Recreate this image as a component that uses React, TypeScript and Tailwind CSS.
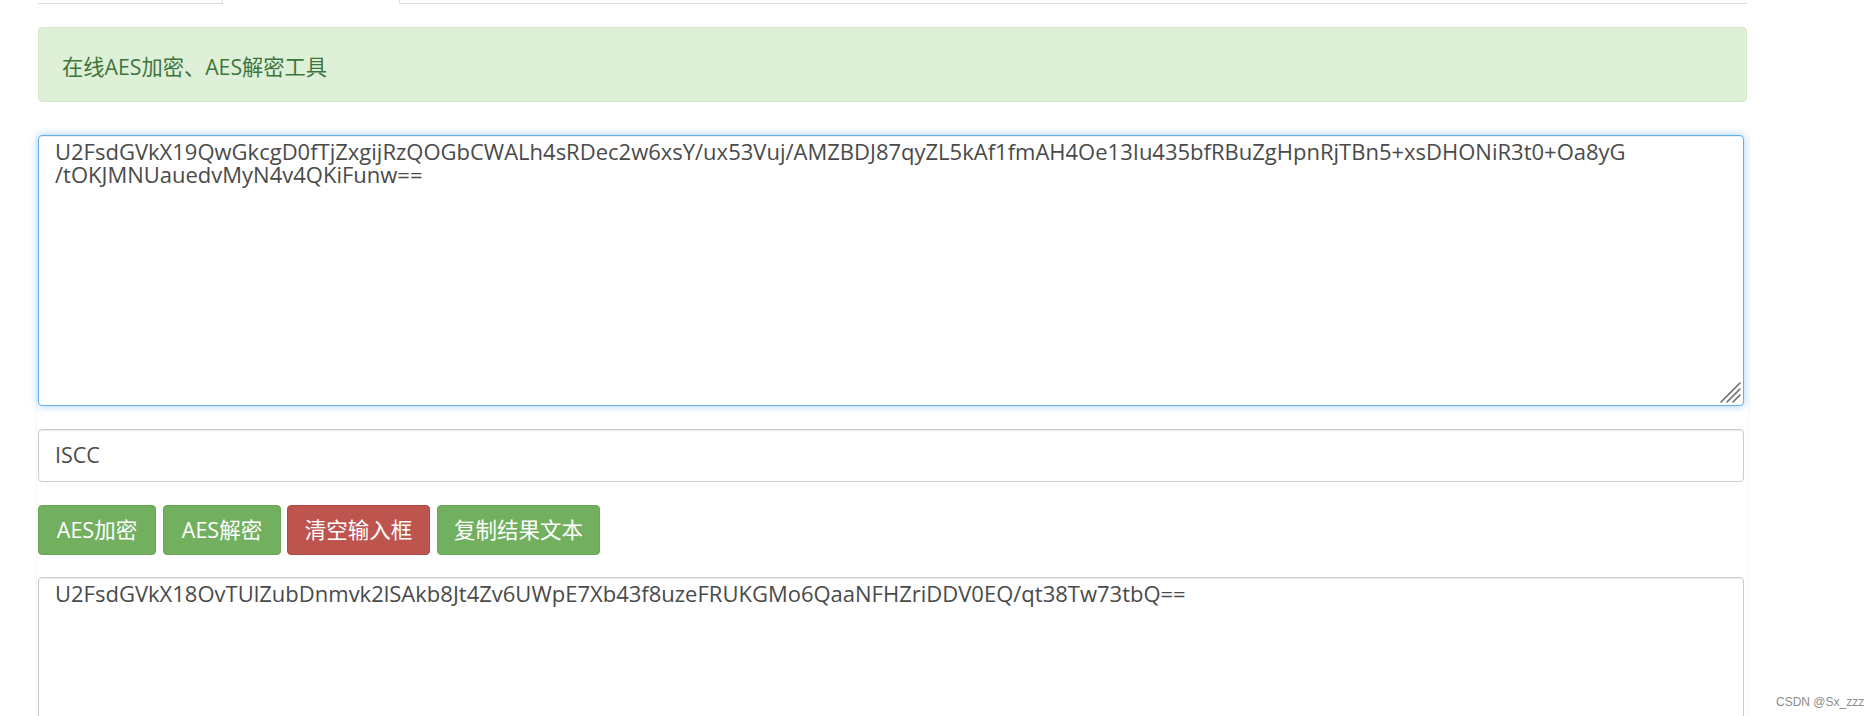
import React from 'react';

const cipherLines = [
  'U2FsdGVkX19QwGkcgD0fTjZxgijRzQOGbCWALh4sRDec2w6xsY/ux53Vuj/AMZBDJ87qyZL5kAf1fmAH4Oe13Iu435bfRBuZgHpnRjTBn5+xsDHONiR3t0+Oa8yG',
  '/tOKJMNUauedvMyN4v4QKiFunw==',
];

const resultText = 'U2FsdGVkX18OvTUlZubDnmvk2lSAkb8Jt4Zv6UWpE7Xb43f8uzeFRUKGMo6QaaNFHZriDDV0EQ/qt38Tw73tbQ==';

// Bootstrap-ish buttons, widths taken from the screenshot
const buttons = [
  { label: 'AES加密', cls: 'w-[118px] bg-[#72b060] border-[#68a656]' },
  { label: 'AES解密', cls: 'w-[118px] ml-[7px] bg-[#72b060] border-[#68a656]' },
  { label: '清空输入框', cls: 'w-[143px] ml-[6px] bg-[#bd544e] border-[#b04a45]' },
  { label: '复制结果文本', cls: 'w-[163px] ml-[7px] bg-[#72b060] border-[#68a656]' },
];

const ResizeGrip = () => (
  <svg width="22" height="22" viewBox="0 0 22 22" className="absolute right-[2px] bottom-[2px]">
    <path d="M2 21 L21 2 M8 21 L21 8 M14 21 L21 14" stroke="#6b6b6b" strokeWidth="1.6" strokeLinecap="round" />
  </svg>
);

const App: React.FC = () => {
  return (
    <div className="relative w-[1868px] h-[716px] overflow-hidden bg-white font-['Open_Sans','Noto_Sans_CJK_SC',sans-serif] text-[21.5px]">
      <div className="ml-[38px] w-[1709px]">
        {/* Tabs (scrolled mostly out of view) */}
        <div className="flex h-[4px]">
          <div className="w-[184px] border-b border-[#ddd]" />
          <div className="w-[178px] border-x border-[#ddd]" />
          <div className="flex-1 border-b border-[#ddd]" />
        </div>

        {/* Alert */}
        <div className="mt-[23px] h-[75px] flex items-center pt-[4px] pl-[23px] bg-[#dff0d8] border border-[#d6e9c6] rounded-[4px] text-[#3c763d] text-[21.25px]">
          在线AES加密、AES解密工具
        </div>
      </div>

      <div className="ml-[36px] w-[1713px] border-x border-[#f6f6f6] pl-[1px] pr-[4px]">
        {/* Input textarea (focused) */}
        <div className="relative mt-[33px] h-[271px] border border-[#66afe9] rounded-[4px] bg-white shadow-[inset_0_1px_1px_rgba(0,0,0,0.075),0_0_8px_rgba(102,175,233,0.6)] px-[16px] pt-[4px] text-[22px] leading-[23px] text-[#4a4a4a]">
          {cipherLines.map((line, i) => (
            <div key={i} className="whitespace-nowrap">{line}</div>
          ))}
          <ResizeGrip />
        </div>

        {/* Key */}
        <div className="mt-[23px] h-[53px] flex items-center border border-[#ccc] rounded-[4px] shadow-[inset_0_1px_1px_rgba(0,0,0,0.075)] px-[16px] text-[#4a4a4a]">
          ISCC
        </div>

        {/* Buttons */}
        <div className="mt-[23px] flex">
          {buttons.map(b => (
            <button
              key={b.label}
              className={`${b.cls} h-[50px] border rounded-[4px] text-white flex items-center justify-center`}
            >
              {b.label}
            </button>
          ))}
        </div>

        {/* Result */}
        <div className="mt-[22px] h-[300px] border border-[#ccc] rounded-[4px] shadow-[inset_0_1px_1px_rgba(0,0,0,0.075)] px-[16px] pt-[4px] text-[22px] leading-[23px] text-[#4a4a4a]">
          {resultText}
        </div>
      </div>

      <div className="absolute left-[1776px] top-[694px] text-[12px] leading-[16px] text-[#8c8c8c] font-['Liberation_Sans',sans-serif]">
        CSDN @Sx_zzz
      </div>
    </div>
  );
};

export default App;
